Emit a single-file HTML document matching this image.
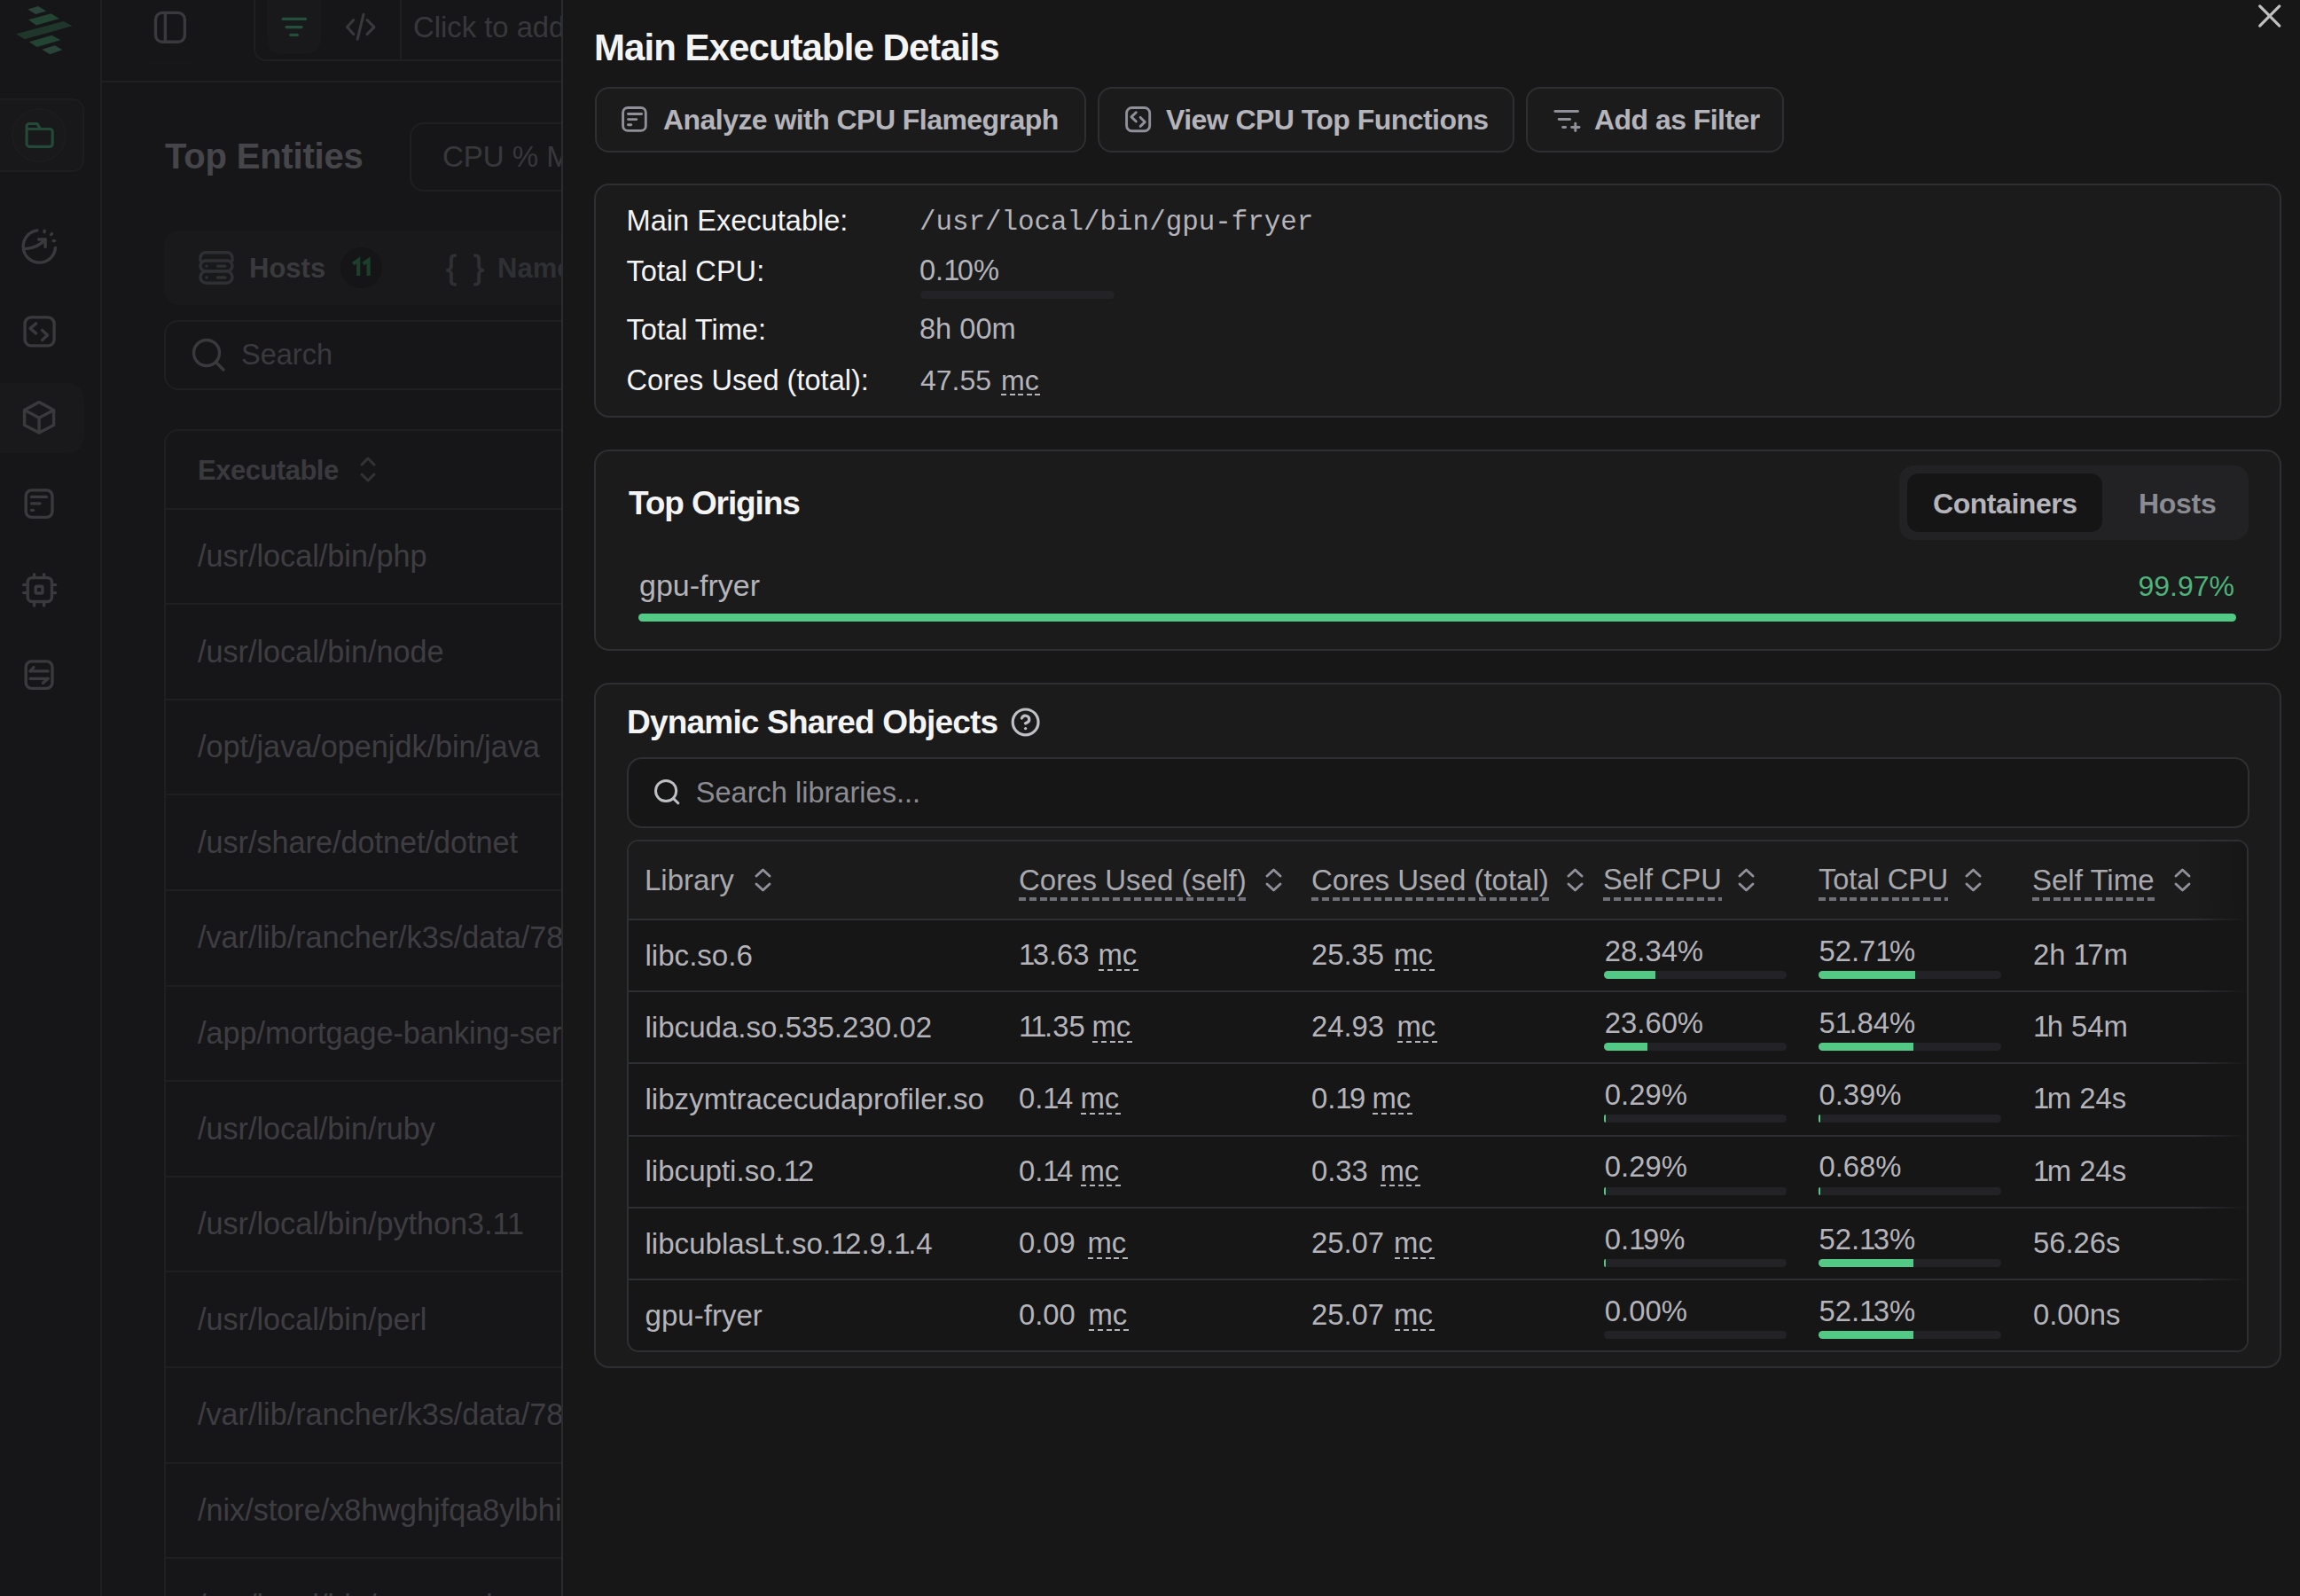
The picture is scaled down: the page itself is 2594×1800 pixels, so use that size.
<!DOCTYPE html>
<html><head><meta charset="utf-8"><title>Main Executable Details</title>
<style>
html,body{margin:0;padding:0;width:2594px;height:1800px;overflow:hidden;background:#161618;font-family:'Liberation Sans', sans-serif;}
</style></head><body>
<div style="position:absolute;left:113px;top:0px;width:2px;height:1800px;background:#1f1f22"></div><div style="position:absolute;left:115px;top:91px;width:519px;height:2px;background:#1f1f22"></div><svg style="position:absolute;left:0;top:0" width="100" height="70" viewBox="0 0 100 70"><polygon points="31.3,10.4 43.1,7 52.2,12.5 40.3,16" fill="#2a443a"/><polygon points="32,22.3 57.7,15.3 66.8,20.9 41,28.5" fill="#234433"/><polygon points="18.1,38.3 71.7,23.9 81.4,29.2 27.8,44.2" fill="#1f372b"/><polygon points="32.7,47.3 58.4,39.7 68.2,45.2 41.7,52.9" fill="#234433"/><polygon points="47.3,55.7 61.9,51.2 70.3,56.3 56.3,61.2" fill="#2a443a"/></svg><div style="position:absolute;left:-20px;top:111px;width:115px;height:83px;background:#18181a;border:2px solid #1d1d20;border-radius:13px;box-sizing:border-box"></div><div style="position:absolute;left:13px;top:122px;width:62px;height:61px;background:#19191b;border:2px solid #1c1c1f;border-radius:50%;box-sizing:border-box"></div><svg style="position:absolute;left:28px;top:137px;overflow:visible;" width="34" height="32" viewBox="0 0 34 32" fill="none" stroke="#234a37" stroke-width="3.1" stroke-linecap="round" stroke-linejoin="round"><path d="M2.1 25.4 V5.5 a3 3 0 0 1 3 -3 H14 l3.5 6 H28.2 a3 3 0 0 1 3 3 V25.4 a3 3 0 0 1 -3 3 H5.1 a3 3 0 0 1 -3 -3 Z M2.1 8.5 H17.5"/></svg><svg style="position:absolute;left:20px;top:254px;overflow:visible;" width="48" height="48" viewBox="0 0 48 48" fill="none" stroke="#3a3a3e" stroke-width="3.4" stroke-linecap="round" stroke-linejoin="round"><path d="M22 5.9 A18.2 18.2 0 1 0 42.5 25.5"/><path d="M8.6 26.6 Q22 26 31.1 16" /><path d="M23.6 16 L31.1 16 L31.1 24.6"/><path d="M30.1 6.3 L30.1 7.7"/><path d="M38.6 9.6 L37.6 10.6"/><path d="M41.6 17.6 L40.2 17.6"/></svg><svg style="position:absolute;left:24px;top:354px;overflow:visible;" width="40" height="40" viewBox="0 0 40 40" fill="none" stroke="#3a3a3e" stroke-width="3.4" stroke-linecap="round" stroke-linejoin="round"><rect x="4.1" y="3.9" width="33" height="32" rx="7"/><path d="M16.6 10.9 L10.1 16.4 L16.6 21.9"/><path d="M23.6 18.4 L29.6 23.9 L23.6 29.4"/></svg><div style="position:absolute;left:-20px;top:432px;width:115px;height:79px;background:#19191b;border-radius:18px"></div><svg style="position:absolute;left:24px;top:450px;overflow:visible;" width="40" height="42" viewBox="0 0 40 42" fill="none" stroke="#3a3a3e" stroke-width="3.4" stroke-linecap="round" stroke-linejoin="round"><path d="M20.1 3.6 L36.6 12.6 L36.6 29.6 L20.1 38 L3.6 29.6 L3.6 12.6 Z"/><path d="M3.6 12.6 L20.1 21.2 L36.6 12.6"/><path d="M20.1 21.2 L20.1 38"/></svg><svg style="position:absolute;left:24px;top:548px;overflow:visible;" width="40" height="40" viewBox="0 0 40 40" fill="none" stroke="#3a3a3e" stroke-width="3.4" stroke-linecap="round" stroke-linejoin="round"><rect x="5.2" y="4.9" width="29.8" height="30.5" rx="6.5"/><path d="M11.6 12.4 L28.4 12.4"/><path d="M11.6 19.9 L21 19.9"/><path d="M11.6 27.4 L13.5 27.4"/></svg><svg style="position:absolute;left:22px;top:642px;overflow:visible;" width="44" height="44" viewBox="0 0 44 44" fill="none" stroke="#3a3a3e" stroke-width="3.4" stroke-linecap="round" stroke-linejoin="round"><rect x="9.2" y="9.6" width="27.3" height="26.9" rx="5"/><rect x="18.2" y="19.2" width="7.8" height="7.8" rx="1.5"/><path d="M16.6 5.6 L16.6 9.6"/><path d="M27.6 5.6 L27.6 9.6"/><path d="M16.6 36.5 L16.6 41"/><path d="M27.6 36.5 L27.6 41"/><path d="M4.6 17.6 L9.2 17.6"/><path d="M4.6 26.6 L9.2 26.6"/><path d="M36.5 17.6 L40.6 17.6"/><path d="M36.5 26.6 L40.6 26.6"/></svg><svg style="position:absolute;left:24px;top:742px;overflow:visible;" width="40" height="40" viewBox="0 0 40 40" fill="none" stroke="#3a3a3e" stroke-width="3.4" stroke-linecap="round" stroke-linejoin="round"><rect x="5.2" y="3.9" width="29.8" height="30.5" rx="6.5"/><path d="M10.2 14.9 L30 14.9"/><path d="M14 10.5 L10.2 14.9"/><path d="M10.2 23.4 L30 23.4"/><path d="M30 23.4 L24.5 28.3"/></svg><svg style="position:absolute;left:172px;top:11px;overflow:visible;" width="40" height="40" viewBox="0 0 40 40" fill="none" stroke="#3a3a3e" stroke-width="3.4" stroke-linecap="round" stroke-linejoin="round"><rect x="3.5" y="3.4" width="32.9" height="32.9" rx="7.5"/><path d="M14.4 3.4 L14.4 36.3"/></svg><div style="position:absolute;left:167px;top:71px;width:50px;height:1px;background:#18181b"></div><div style="position:absolute;left:286px;top:-20px;width:414px;height:89px;border:2px solid #1f1f22;border-radius:14px;box-sizing:border-box"></div><div style="position:absolute;left:301px;top:-20px;width:61px;height:81px;background:#19191b;border-radius:16px"></div><svg style="position:absolute;left:314px;top:18px;overflow:visible;" width="36" height="26" viewBox="0 0 36 26" fill="none" stroke="#22503a" stroke-width="3.2" stroke-linecap="round" stroke-linejoin="round"><path d="M5 3.4 L30.5 3.4"/><path d="M9 12.6 L26.1 12.6"/><path d="M13.8 21.4 L21.3 21.4"/></svg><svg style="position:absolute;left:388px;top:13px;overflow:visible;" width="38" height="36" viewBox="0 0 38 36" fill="none" stroke="#3a3a3e" stroke-width="3" stroke-linecap="round" stroke-linejoin="round"><path d="M10.7 9.5 L3.5 17.6 L10.7 25.6"/><path d="M26 9.5 L34 17.6 L26 25.6"/><path d="M22 3.1 L15.2 31.2"/></svg><div style="position:absolute;left:451px;top:0px;width:2px;height:69px;background:#1f1f22"></div><div style="position:absolute;left:466px;top:14.83px;font-family:'Liberation Sans', sans-serif;font-size:32.8px;line-height:32.8px;font-weight:400;color:#38383c;letter-spacing:0px;white-space:nowrap;">Click to add a filter</div><div style="position:absolute;left:186px;top:156.13px;font-family:'Liberation Sans', sans-serif;font-size:40px;line-height:40px;font-weight:700;color:#46464a;letter-spacing:-0.2px;white-space:nowrap;">Top Entities</div><div style="position:absolute;left:462px;top:138px;width:438px;height:78px;border:2px solid #1f1f22;border-radius:16px;box-sizing:border-box"></div><div style="position:absolute;left:499px;top:160.06px;font-family:'Liberation Sans', sans-serif;font-size:33px;line-height:33px;font-weight:400;color:#38383c;letter-spacing:0px;white-space:nowrap;">CPU % Mem</div><div style="position:absolute;left:185px;top:260px;width:715px;height:84px;background:#19191b;border-radius:16px"></div><svg style="position:absolute;left:222px;top:281px;overflow:visible;" width="44" height="42" viewBox="0 0 44 42" fill="none" stroke="#2f3034" stroke-width="3.4" stroke-linecap="round" stroke-linejoin="round"><path d="M4 13 V9.7 a6 6 0 0 1 6 -6 H34 a6 6 0 0 1 6 6 V13"/><rect x="4" y="13" width="36" height="11.8" rx="5.9"/><rect x="4" y="24.8" width="36" height="13.4" rx="6.7"/><path d="M11 19.1 L11.1 19.1"/><path d="M23.5 19.1 L31.9 19.1"/><path d="M11 32 L11.1 32"/><path d="M23.5 32 L31.9 32"/></svg><div style="position:absolute;left:281px;top:286.75px;font-family:'Liberation Sans', sans-serif;font-size:31px;line-height:31px;font-weight:700;color:#3a3a3e;letter-spacing:0px;white-space:nowrap;">Hosts</div><div style="position:absolute;left:384px;top:278.5px;width:46.5px;height:46.5px;background:#151517;border-radius:50%"></div><svg style="position:absolute;left:395px;top:290px;overflow:visible;stroke-linecap:butt;stroke-linejoin:miter" width="26" height="26" viewBox="0 0 26 26" fill="none" stroke="#1b3f29" stroke-width="4.2" stroke-linecap="round" stroke-linejoin="round"><path d="M3.2 7.6 L9.2 3.4 V21"/><path d="M14.6 7.6 L20.6 3.4 V21"/></svg><div style="position:absolute;left:503px;top:283.52px;font-family:'Liberation Sans', sans-serif;font-size:36px;line-height:36px;font-weight:400;color:#303135;letter-spacing:0px;white-space:nowrap;-webkit-text-stroke:0.8px #303135">{</div><div style="position:absolute;left:534px;top:283.52px;font-family:'Liberation Sans', sans-serif;font-size:36px;line-height:36px;font-weight:400;color:#303135;letter-spacing:0px;white-space:nowrap;-webkit-text-stroke:0.8px #303135">}</div><div style="position:absolute;left:561px;top:286.75px;font-family:'Liberation Sans', sans-serif;font-size:31px;line-height:31px;font-weight:700;color:#2f3034;letter-spacing:0px;white-space:nowrap;">Namespaces</div><div style="position:absolute;left:185px;top:361px;width:715px;height:79px;border:2px solid #1f1f22;border-radius:16px;box-sizing:border-box"></div><svg style="position:absolute;left:216px;top:381px;overflow:visible;" width="40" height="40" viewBox="0 0 40 40" fill="none" stroke="#3a3a3e" stroke-width="3.4" stroke-linecap="round" stroke-linejoin="round"><circle cx="17" cy="17" r="14.5"/><path d="M27.5 27.5 L36 36"/></svg><div style="position:absolute;left:272px;top:384.48px;font-family:'Liberation Sans', sans-serif;font-size:32.5px;line-height:32.5px;font-weight:400;color:#3a3a3e;letter-spacing:0px;white-space:nowrap;">Search</div><div style="position:absolute;left:185px;top:484px;width:715px;height:1516px;border:2px solid #1f1f22;border-radius:16px;box-sizing:border-box"></div><div style="position:absolute;left:223px;top:514.75px;font-family:'Liberation Sans', sans-serif;font-size:31px;line-height:31px;font-weight:700;color:#3a3a3e;letter-spacing:-0.5px;white-space:nowrap;">Executable</div><svg style="position:absolute;left:404px;top:514px;overflow:visible;" width="24" height="32" viewBox="0 0 24 32" fill="none" stroke="#333336" stroke-width="3" stroke-linecap="round" stroke-linejoin="round"><path d="M4 10 L11 3 L18 10"/><path d="M4 21 L11 28 L18 21"/></svg><div style="position:absolute;left:187px;top:572.5px;width:713px;height:2.0px;background:#1f1f22"></div><div style="position:absolute;left:223px;top:610.04px;font-family:'Liberation Sans', sans-serif;font-size:34.2px;line-height:34.2px;font-weight:400;color:#3e3e42;letter-spacing:0px;white-space:nowrap;">/usr/local/bin/php</div><div style="position:absolute;left:187px;top:680.1px;width:713px;height:2.0px;background:#1f1f22"></div><div style="position:absolute;left:223px;top:717.64px;font-family:'Liberation Sans', sans-serif;font-size:34.2px;line-height:34.2px;font-weight:400;color:#3e3e42;letter-spacing:0px;white-space:nowrap;">/usr/local/bin/node</div><div style="position:absolute;left:187px;top:787.7px;width:713px;height:2.0px;background:#1f1f22"></div><div style="position:absolute;left:223px;top:825.24px;font-family:'Liberation Sans', sans-serif;font-size:34.2px;line-height:34.2px;font-weight:400;color:#3e3e42;letter-spacing:0px;white-space:nowrap;">/opt/java/openjdk/bin/java</div><div style="position:absolute;left:187px;top:895.3px;width:713px;height:2.0px;background:#1f1f22"></div><div style="position:absolute;left:223px;top:932.84px;font-family:'Liberation Sans', sans-serif;font-size:34.2px;line-height:34.2px;font-weight:400;color:#3e3e42;letter-spacing:0px;white-space:nowrap;">/usr/share/dotnet/dotnet</div><div style="position:absolute;left:187px;top:1002.9px;width:713px;height:2.0px;background:#1f1f22"></div><div style="position:absolute;left:223px;top:1040.44px;font-family:'Liberation Sans', sans-serif;font-size:34.2px;line-height:34.2px;font-weight:400;color:#3e3e42;letter-spacing:0px;white-space:nowrap;">/var/lib/rancher/k3s/data/78a9c8</div><div style="position:absolute;left:187px;top:1110.5px;width:713px;height:2.0px;background:#1f1f22"></div><div style="position:absolute;left:223px;top:1148.04px;font-family:'Liberation Sans', sans-serif;font-size:34.2px;line-height:34.2px;font-weight:400;color:#3e3e42;letter-spacing:0px;white-space:nowrap;">/app/mortgage-banking-service</div><div style="position:absolute;left:187px;top:1218.1px;width:713px;height:2.0px;background:#1f1f22"></div><div style="position:absolute;left:223px;top:1255.64px;font-family:'Liberation Sans', sans-serif;font-size:34.2px;line-height:34.2px;font-weight:400;color:#3e3e42;letter-spacing:0px;white-space:nowrap;">/usr/local/bin/ruby</div><div style="position:absolute;left:187px;top:1325.6999999999998px;width:713px;height:2.0px;background:#1f1f22"></div><div style="position:absolute;left:223px;top:1363.24px;font-family:'Liberation Sans', sans-serif;font-size:34.2px;line-height:34.2px;font-weight:400;color:#3e3e42;letter-spacing:0px;white-space:nowrap;">/usr/local/bin/python3.11</div><div style="position:absolute;left:187px;top:1433.3px;width:713px;height:2.0px;background:#1f1f22"></div><div style="position:absolute;left:223px;top:1470.84px;font-family:'Liberation Sans', sans-serif;font-size:34.2px;line-height:34.2px;font-weight:400;color:#3e3e42;letter-spacing:0px;white-space:nowrap;">/usr/local/bin/perl</div><div style="position:absolute;left:187px;top:1540.9px;width:713px;height:2.0px;background:#1f1f22"></div><div style="position:absolute;left:223px;top:1578.44px;font-family:'Liberation Sans', sans-serif;font-size:34.2px;line-height:34.2px;font-weight:400;color:#3e3e42;letter-spacing:0px;white-space:nowrap;">/var/lib/rancher/k3s/data/78a9c8</div><div style="position:absolute;left:187px;top:1648.5px;width:713px;height:2.0px;background:#1f1f22"></div><div style="position:absolute;left:223px;top:1686.04px;font-family:'Liberation Sans', sans-serif;font-size:34.2px;line-height:34.2px;font-weight:400;color:#3e3e42;letter-spacing:0px;white-space:nowrap;">/nix/store/x8hwghjfqa8ylbhi3k</div><div style="position:absolute;left:187px;top:1756.1px;width:713px;height:2.0px;background:#1f1f22"></div><div style="position:absolute;left:223px;top:1793.64px;font-family:'Liberation Sans', sans-serif;font-size:34.2px;line-height:34.2px;font-weight:400;color:#3e3e42;letter-spacing:0px;white-space:nowrap;">/usr/local/bin/some-other</div><div style="position:absolute;left:633px;top:0px;width:1961px;height:1800px;background:#171717;border-left:2px solid #2c2c30;box-sizing:border-box"></div><svg style="position:absolute;left:2544px;top:2px;overflow:visible;" width="32" height="32" viewBox="0 0 32 32" fill="none" stroke="#c0c0c0" stroke-width="3.2" stroke-linecap="round" stroke-linejoin="round"><path d="M4.7 4.9 L26.8 27.1"/><path d="M26.8 4.9 L4.7 27.1"/></svg><div style="position:absolute;left:670px;top:32.74px;font-family:'Liberation Sans', sans-serif;font-size:42px;line-height:42px;font-weight:700;color:#f4f4f5;letter-spacing:-0.95px;white-space:nowrap;">Main Executable Details</div><div style="position:absolute;left:671px;top:98px;width:554px;height:74px;background:#1b1b1c;border:2px solid #2e2f33;border-radius:16px;box-sizing:border-box"></div><svg style="position:absolute;left:699px;top:118px" width="33" height="33" viewBox="0 0 33 33" fill="none" stroke="#8f9099" stroke-width="2.9" stroke-linecap="round"><rect x="3.6" y="3.5" width="25.7" height="25.9" rx="5.5"/><path d="M9.5 10.5 L24.6 10.5"/><path d="M9.5 16.6 L18.8 16.6"/><path d="M9.5 22.7 L12.7 22.7"/></svg><div style="position:absolute;left:748px;top:118.91px;font-family:'Liberation Sans', sans-serif;font-size:32px;line-height:32px;font-weight:700;color:#b4b4ba;letter-spacing:-0.55px;white-space:nowrap;">Analyze with CPU Flamegraph</div><div style="position:absolute;left:1238px;top:98px;width:470px;height:74px;background:#1b1b1c;border:2px solid #2e2f33;border-radius:16px;box-sizing:border-box"></div><svg style="position:absolute;left:1266px;top:118px" width="33" height="33" viewBox="0 0 33 33" fill="none" stroke="#8f9099" stroke-width="2.9" stroke-linecap="round" stroke-linejoin="round"><rect x="4.6" y="3.5" width="26.1" height="26.2" rx="6"/><path d="M15.3 8.8 L10 13.9 L15.3 19"/><path d="M20.2 14.4 L25.2 19.6 L20.2 24.4"/></svg><div style="position:absolute;left:1315px;top:118.91px;font-family:'Liberation Sans', sans-serif;font-size:32px;line-height:32px;font-weight:700;color:#b4b4ba;letter-spacing:-0.55px;white-space:nowrap;">View CPU Top Functions</div><div style="position:absolute;left:1721px;top:98px;width:291px;height:74px;background:#1b1b1c;border:2px solid #2e2f33;border-radius:16px;box-sizing:border-box"></div><svg style="position:absolute;left:1749px;top:118px" width="36" height="33" viewBox="0 0 36 33" fill="none" stroke="#8f9099" stroke-width="2.9" stroke-linecap="round"><path d="M4.9 7.5 L30.5 7.5"/><path d="M9.2 16.5 L21.6 16.5"/><path d="M13.7 25.5 L16.6 25.5"/><path d="M23.7 25.5 L32 25.5"/><path d="M27.8 21.1 L27.8 29.6"/></svg><div style="position:absolute;left:1798px;top:118.91px;font-family:'Liberation Sans', sans-serif;font-size:32px;line-height:32px;font-weight:700;color:#b4b4ba;letter-spacing:-0.55px;white-space:nowrap;">Add as Filter</div><div style="position:absolute;left:670px;top:207px;width:1903px;height:264px;background:#1b1b1c;border:2px solid #2e2f33;border-radius:17px;box-sizing:border-box"></div><div style="position:absolute;left:706.5px;top:233.20px;font-family:'Liberation Sans', sans-serif;font-size:32.6px;line-height:32.6px;font-weight:400;color:#f4f4f5;letter-spacing:0px;white-space:nowrap;">Main Executable:</div><div style="position:absolute;left:706.5px;top:290.20px;font-family:'Liberation Sans', sans-serif;font-size:32.6px;line-height:32.6px;font-weight:400;color:#f4f4f5;letter-spacing:0px;white-space:nowrap;">Total CPU:</div><div style="position:absolute;left:706.5px;top:355.70px;font-family:'Liberation Sans', sans-serif;font-size:32.6px;line-height:32.6px;font-weight:400;color:#f4f4f5;letter-spacing:0px;white-space:nowrap;">Total Time:</div><div style="position:absolute;left:706.5px;top:413.20px;font-family:'Liberation Sans', sans-serif;font-size:32.6px;line-height:32.6px;font-weight:400;color:#f4f4f5;letter-spacing:0px;white-space:nowrap;">Cores Used (total):</div><div style="position:absolute;left:1037px;top:235.87px;font-family:'Liberation Mono', monospace;font-size:30.85px;line-height:30.85px;font-weight:400;color:#b4b4ba;letter-spacing:0px;white-space:nowrap;">/usr/local/bin/gpu-fryer</div><div style="position:absolute;left:1037px;top:289.40px;font-family:'Liberation Sans', sans-serif;font-size:32.6px;line-height:32.6px;font-weight:400;color:#b4b4ba;letter-spacing:0px;white-space:nowrap;">0.<span style="letter-spacing:-2.5px">1</span>0%</div><div style="position:absolute;left:1038px;top:328px;width:219px;height:9px;background:#232327;border-radius:5px"></div><div style="position:absolute;left:1037px;top:354.90px;font-family:'Liberation Sans', sans-serif;font-size:32.6px;line-height:32.6px;font-weight:400;color:#b4b4ba;letter-spacing:0px;white-space:nowrap;">8h 00m</div><div style="position:absolute;left:1038px;top:412.91px;font-family:'Liberation Sans', sans-serif;font-size:32px;line-height:32px;font-weight:400;color:#b4b4ba;letter-spacing:0px;white-space:nowrap;">47.55</div><div style="position:absolute;left:1129px;top:412.91px;font-family:'Liberation Sans', sans-serif;font-size:32px;line-height:32px;font-weight:400;color:#b4b4ba;letter-spacing:0px;white-space:nowrap;">mc</div><div style="position:absolute;left:1129px;top:444px;width:44px;height:2px;background:repeating-linear-gradient(90deg,#b4b4ba 0 6px,transparent 6px 9.6px)"></div><div style="position:absolute;left:670px;top:507px;width:1903px;height:227px;background:#1b1b1c;border:2px solid #2e2f33;border-radius:17px;box-sizing:border-box"></div><div style="position:absolute;left:709px;top:548.67px;font-family:'Liberation Sans', sans-serif;font-size:37px;line-height:37px;font-weight:700;color:#f4f4f5;letter-spacing:-1.1px;white-space:nowrap;">Top Origins</div><div style="position:absolute;left:2142px;top:525px;width:394px;height:84px;background:#222225;border-radius:16px"></div><div style="position:absolute;left:2151px;top:534px;width:220px;height:66px;background:#151516;border-radius:13px"></div><div style="position:absolute;left:2180px;top:551.51px;font-family:'Liberation Sans', sans-serif;font-size:32px;line-height:32px;font-weight:700;color:#b4b4ba;letter-spacing:-0.45px;white-space:nowrap;">Containers</div><div style="position:absolute;left:2412px;top:551.51px;font-family:'Liberation Sans', sans-serif;font-size:32px;line-height:32px;font-weight:700;color:#8b8b92;letter-spacing:-0.3px;white-space:nowrap;">Hosts</div><div style="position:absolute;left:721px;top:643.41px;font-family:'Liberation Sans', sans-serif;font-size:34px;line-height:34px;font-weight:400;color:#b4b4ba;letter-spacing:0px;white-space:nowrap;">gpu-fryer</div><div style="position:absolute;right:74px;top:644.71px;font-family:'Liberation Sans', sans-serif;font-size:32px;line-height:32px;font-weight:400;color:#4fb37a;letter-spacing:0px;white-space:nowrap;">99.97%</div><div style="position:absolute;left:720px;top:692px;width:1802px;height:9px;background:#52c985;border-radius:5px"></div><div style="position:absolute;left:670px;top:770px;width:1903px;height:773px;background:#1b1b1c;border:2px solid #2e2f33;border-radius:17px;box-sizing:border-box"></div><div style="position:absolute;left:707px;top:795.97px;font-family:'Liberation Sans', sans-serif;font-size:37px;line-height:37px;font-weight:700;color:#f4f4f5;letter-spacing:-0.8px;white-space:nowrap;">Dynamic Shared Objects</div><svg style="position:absolute;left:1139px;top:797px;overflow:visible;" width="35" height="35" viewBox="0 0 35 35" fill="none" stroke="#bfc0c5" stroke-width="3.2" stroke-linecap="round" stroke-linejoin="round"><circle cx="17.6" cy="17.4" r="14.4"/><g transform="translate(0.32 0.12) scale(1.44)" stroke-width="2.25"><path d="M9.09 9a3 3 0 0 1 5.83 1c0 2-3 3-3 3"/><path d="M12 17h.01"/></g></svg><div style="position:absolute;left:707px;top:854px;width:1830px;height:80px;background:#161617;border:2px solid #2e2f33;border-radius:17px;box-sizing:border-box"></div><svg style="position:absolute;left:735px;top:876px;overflow:visible;" width="36" height="36" viewBox="0 0 36 36" fill="none" stroke="#bfc0c5" stroke-width="3" stroke-linecap="round" stroke-linejoin="round"><circle cx="16.1" cy="16" r="11.6"/><path d="M24.6 24.6 L29.8 29.8"/></svg><div style="position:absolute;left:784.7px;top:878.20px;font-family:'Liberation Sans', sans-serif;font-size:32.6px;line-height:32.6px;font-weight:400;color:#8b8b92;letter-spacing:0px;white-space:nowrap;">Search libraries...</div><div style="position:absolute;left:707px;top:947px;width:1829px;height:578px;background:#161617;border:2px solid #2e2f33;border-radius:13px;box-sizing:border-box;overflow:hidden"></div><div style="position:absolute;left:709px;top:949px;width:1825px;height:87px;background:#1b1b1c;border-radius:11px 11px 0 0"></div><div style="position:absolute;left:709px;top:1036px;width:1825px;height:2px;background:#2e2f33"></div><div style="position:absolute;left:727px;top:975.66px;font-family:'Liberation Sans', sans-serif;font-size:33px;line-height:33px;font-weight:400;color:#a9a9ae;letter-spacing:0px;white-space:nowrap;">Library</div><svg style="position:absolute;left:849px;top:976px;overflow:visible;" width="25" height="32" viewBox="0 0 25 32" fill="none" stroke="#8f9099" stroke-width="2.9" stroke-linecap="round" stroke-linejoin="round"><path d="M4 12 L11.5 5 L19 12"/><path d="M4 21 L11.5 28 L19 21"/></svg><div style="position:absolute;left:1149px;top:975.66px;font-family:'Liberation Sans', sans-serif;font-size:33px;line-height:33px;font-weight:400;color:#a9a9ae;letter-spacing:0px;white-space:nowrap;">Cores Used (self)<div style="position:absolute;left:0;right:0px;top:36.5411px;height:3.6px;background:repeating-linear-gradient(90deg,#6f7078 0 8px,transparent 8px 11.8px)"></div></div><svg style="position:absolute;left:1424.5px;top:976px;overflow:visible;" width="25" height="32" viewBox="0 0 25 32" fill="none" stroke="#8f9099" stroke-width="2.9" stroke-linecap="round" stroke-linejoin="round"><path d="M4 12 L11.5 5 L19 12"/><path d="M4 21 L11.5 28 L19 21"/></svg><div style="position:absolute;left:1479px;top:975.66px;font-family:'Liberation Sans', sans-serif;font-size:33px;line-height:33px;font-weight:400;color:#a9a9ae;letter-spacing:0px;white-space:nowrap;">Cores Used (total)<div style="position:absolute;left:0;right:0px;top:36.5411px;height:3.6px;background:repeating-linear-gradient(90deg,#6f7078 0 8px,transparent 8px 11.8px)"></div></div><svg style="position:absolute;left:1765px;top:976px;overflow:visible;" width="25" height="32" viewBox="0 0 25 32" fill="none" stroke="#8f9099" stroke-width="2.9" stroke-linecap="round" stroke-linejoin="round"><path d="M4 12 L11.5 5 L19 12"/><path d="M4 21 L11.5 28 L19 21"/></svg><div style="position:absolute;left:1808px;top:976.08px;font-family:'Liberation Sans', sans-serif;font-size:32.5px;line-height:32.5px;font-weight:400;color:#a9a9ae;letter-spacing:0px;white-space:nowrap;">Self CPU<div style="position:absolute;left:0;right:0px;top:36.11775px;height:3.6px;background:repeating-linear-gradient(90deg,#6f7078 0 8px,transparent 8px 11.8px)"></div></div><svg style="position:absolute;left:1958px;top:976px;overflow:visible;" width="25" height="32" viewBox="0 0 25 32" fill="none" stroke="#8f9099" stroke-width="2.9" stroke-linecap="round" stroke-linejoin="round"><path d="M4 12 L11.5 5 L19 12"/><path d="M4 21 L11.5 28 L19 21"/></svg><div style="position:absolute;left:2051px;top:976.08px;font-family:'Liberation Sans', sans-serif;font-size:32.5px;line-height:32.5px;font-weight:400;color:#a9a9ae;letter-spacing:0px;white-space:nowrap;">Total CPU<div style="position:absolute;left:0;right:0px;top:36.11775px;height:3.6px;background:repeating-linear-gradient(90deg,#6f7078 0 8px,transparent 8px 11.8px)"></div></div><svg style="position:absolute;left:2214px;top:976px;overflow:visible;" width="25" height="32" viewBox="0 0 25 32" fill="none" stroke="#8f9099" stroke-width="2.9" stroke-linecap="round" stroke-linejoin="round"><path d="M4 12 L11.5 5 L19 12"/><path d="M4 21 L11.5 28 L19 21"/></svg><div style="position:absolute;left:2292px;top:975.66px;font-family:'Liberation Sans', sans-serif;font-size:33px;line-height:33px;font-weight:400;color:#a9a9ae;letter-spacing:0px;white-space:nowrap;">Self Time<div style="position:absolute;left:0;right:0px;top:36.5411px;height:3.6px;background:repeating-linear-gradient(90deg,#6f7078 0 8px,transparent 8px 11.8px)"></div></div><svg style="position:absolute;left:2450px;top:976px;overflow:visible;" width="25" height="32" viewBox="0 0 25 32" fill="none" stroke="#8f9099" stroke-width="2.9" stroke-linecap="round" stroke-linejoin="round"><path d="M4 12 L11.5 5 L19 12"/><path d="M4 21 L11.5 28 L19 21"/></svg><div style="position:absolute;left:727.5px;top:1060.77px;font-family:'Liberation Sans', sans-serif;font-size:33.1px;line-height:33.1px;font-weight:400;color:#b4b4ba;letter-spacing:0px;white-space:nowrap;">libc.so.6</div><div style="position:absolute;left:1149px;top:1061.03px;font-family:'Liberation Sans', sans-serif;font-size:32.8px;line-height:32.8px;font-weight:400;color:#b4b4ba;letter-spacing:0px;white-space:nowrap;"><span style="letter-spacing:-2.5px">1</span>3.63</div><div style="position:absolute;left:1479px;top:1061.03px;font-family:'Liberation Sans', sans-serif;font-size:32.8px;line-height:32.8px;font-weight:400;color:#b4b4ba;letter-spacing:0px;white-space:nowrap;">25.35</div><div style="position:absolute;left:1238.5px;top:1061.03px;font-family:'Liberation Sans', sans-serif;font-size:32.8px;line-height:32.8px;font-weight:400;color:#b4b4ba;letter-spacing:0px;white-space:nowrap;">mc</div><div style="position:absolute;left:1239px;top:1092.8px;width:45px;height:2.0px;background:repeating-linear-gradient(90deg,#b4b4ba 0 6px,transparent 6px 9.8px)"></div><div style="position:absolute;left:1572.1px;top:1061.03px;font-family:'Liberation Sans', sans-serif;font-size:32.8px;line-height:32.8px;font-weight:400;color:#b4b4ba;letter-spacing:0px;white-space:nowrap;">mc</div><div style="position:absolute;left:1572.6px;top:1092.8px;width:45.0px;height:2.0px;background:repeating-linear-gradient(90deg,#b4b4ba 0 6px,transparent 6px 9.8px)"></div><div style="position:absolute;left:1809.8px;top:1056.73px;font-family:'Liberation Sans', sans-serif;font-size:32.8px;line-height:32.8px;font-weight:400;color:#b4b4ba;letter-spacing:0px;white-space:nowrap;">28.34%</div><div style="position:absolute;left:2051.5px;top:1056.73px;font-family:'Liberation Sans', sans-serif;font-size:32.8px;line-height:32.8px;font-weight:400;color:#b4b4ba;letter-spacing:0px;white-space:nowrap;">52.7<span style="letter-spacing:-2.5px">1</span>%</div><div style="position:absolute;left:2293px;top:1061.03px;font-family:'Liberation Sans', sans-serif;font-size:32.8px;line-height:32.8px;font-weight:400;color:#b4b4ba;letter-spacing:0px;white-space:nowrap;">2h <span style="letter-spacing:-2.5px">1</span>7m</div><div style="position:absolute;left:1809px;top:1095.0px;width:206px;height:9.0px;background:#232327;border-radius:5px"></div><div style="position:absolute;left:1809px;top:1095.0px;width:58.38040000000001px;height:9.0px;background:#52c985;border-radius:5px 0 0 5px"></div><div style="position:absolute;left:2051px;top:1095.0px;width:206px;height:9.0px;background:#232327;border-radius:5px"></div><div style="position:absolute;left:2051px;top:1095.0px;width:108.58260000000018px;height:9.0px;background:#52c985;border-radius:5px 0 0 5px"></div><div style="position:absolute;left:709px;top:1117.2px;width:1825px;height:2.0px;background:#2e2f33"></div><div style="position:absolute;left:727.5px;top:1141.97px;font-family:'Liberation Sans', sans-serif;font-size:33.1px;line-height:33.1px;font-weight:400;color:#b4b4ba;letter-spacing:0px;white-space:nowrap;">libcuda.so.535.230.02</div><div style="position:absolute;left:1149px;top:1142.23px;font-family:'Liberation Sans', sans-serif;font-size:32.8px;line-height:32.8px;font-weight:400;color:#b4b4ba;letter-spacing:0px;white-space:nowrap;"><span style="letter-spacing:-2.5px">1</span><span style="letter-spacing:-2.5px">1</span>.35</div><div style="position:absolute;left:1479px;top:1142.23px;font-family:'Liberation Sans', sans-serif;font-size:32.8px;line-height:32.8px;font-weight:400;color:#b4b4ba;letter-spacing:0px;white-space:nowrap;">24.93</div><div style="position:absolute;left:1231.5px;top:1142.23px;font-family:'Liberation Sans', sans-serif;font-size:32.8px;line-height:32.8px;font-weight:400;color:#b4b4ba;letter-spacing:0px;white-space:nowrap;">mc</div><div style="position:absolute;left:1232px;top:1174.0px;width:45px;height:2.0px;background:repeating-linear-gradient(90deg,#b4b4ba 0 6px,transparent 6px 9.8px)"></div><div style="position:absolute;left:1575.4px;top:1142.23px;font-family:'Liberation Sans', sans-serif;font-size:32.8px;line-height:32.8px;font-weight:400;color:#b4b4ba;letter-spacing:0px;white-space:nowrap;">mc</div><div style="position:absolute;left:1575.9px;top:1174.0px;width:45.0px;height:2.0px;background:repeating-linear-gradient(90deg,#b4b4ba 0 6px,transparent 6px 9.8px)"></div><div style="position:absolute;left:1809.8px;top:1137.93px;font-family:'Liberation Sans', sans-serif;font-size:32.8px;line-height:32.8px;font-weight:400;color:#b4b4ba;letter-spacing:0px;white-space:nowrap;">23.60%</div><div style="position:absolute;left:2051.5px;top:1137.93px;font-family:'Liberation Sans', sans-serif;font-size:32.8px;line-height:32.8px;font-weight:400;color:#b4b4ba;letter-spacing:0px;white-space:nowrap;">5<span style="letter-spacing:-2.5px">1</span>.84%</div><div style="position:absolute;left:2293px;top:1142.23px;font-family:'Liberation Sans', sans-serif;font-size:32.8px;line-height:32.8px;font-weight:400;color:#b4b4ba;letter-spacing:0px;white-space:nowrap;"><span style="letter-spacing:-2.5px">1</span>h 54m</div><div style="position:absolute;left:1809px;top:1176.2px;width:206px;height:9.0px;background:#232327;border-radius:5px"></div><div style="position:absolute;left:1809px;top:1176.2px;width:48.615999999999985px;height:9.0px;background:#52c985;border-radius:5px 0 0 5px"></div><div style="position:absolute;left:2051px;top:1176.2px;width:206px;height:9.0px;background:#232327;border-radius:5px"></div><div style="position:absolute;left:2051px;top:1176.2px;width:106.79039999999986px;height:9.0px;background:#52c985;border-radius:5px 0 0 5px"></div><div style="position:absolute;left:709px;top:1198.4px;width:1825px;height:2.0px;background:#2e2f33"></div><div style="position:absolute;left:727.5px;top:1223.17px;font-family:'Liberation Sans', sans-serif;font-size:33.1px;line-height:33.1px;font-weight:400;color:#b4b4ba;letter-spacing:0px;white-space:nowrap;">libzymtracecudaprofiler.so</div><div style="position:absolute;left:1149px;top:1223.43px;font-family:'Liberation Sans', sans-serif;font-size:32.8px;line-height:32.8px;font-weight:400;color:#b4b4ba;letter-spacing:0px;white-space:nowrap;">0.<span style="letter-spacing:-2.5px">1</span>4</div><div style="position:absolute;left:1479px;top:1223.43px;font-family:'Liberation Sans', sans-serif;font-size:32.8px;line-height:32.8px;font-weight:400;color:#b4b4ba;letter-spacing:0px;white-space:nowrap;">0.<span style="letter-spacing:-2.5px">1</span>9</div><div style="position:absolute;left:1218.5px;top:1223.43px;font-family:'Liberation Sans', sans-serif;font-size:32.8px;line-height:32.8px;font-weight:400;color:#b4b4ba;letter-spacing:0px;white-space:nowrap;">mc</div><div style="position:absolute;left:1219px;top:1255.2px;width:45px;height:2.0px;background:repeating-linear-gradient(90deg,#b4b4ba 0 6px,transparent 6px 9.8px)"></div><div style="position:absolute;left:1547.5px;top:1223.43px;font-family:'Liberation Sans', sans-serif;font-size:32.8px;line-height:32.8px;font-weight:400;color:#b4b4ba;letter-spacing:0px;white-space:nowrap;">mc</div><div style="position:absolute;left:1548px;top:1255.2px;width:45px;height:2.0px;background:repeating-linear-gradient(90deg,#b4b4ba 0 6px,transparent 6px 9.8px)"></div><div style="position:absolute;left:1809.8px;top:1219.13px;font-family:'Liberation Sans', sans-serif;font-size:32.8px;line-height:32.8px;font-weight:400;color:#b4b4ba;letter-spacing:0px;white-space:nowrap;">0.29%</div><div style="position:absolute;left:2051.5px;top:1219.13px;font-family:'Liberation Sans', sans-serif;font-size:32.8px;line-height:32.8px;font-weight:400;color:#b4b4ba;letter-spacing:0px;white-space:nowrap;">0.39%</div><div style="position:absolute;left:2293px;top:1223.43px;font-family:'Liberation Sans', sans-serif;font-size:32.8px;line-height:32.8px;font-weight:400;color:#b4b4ba;letter-spacing:0px;white-space:nowrap;"><span style="letter-spacing:-2.5px">1</span>m 24s</div><div style="position:absolute;left:1809px;top:1257.4px;width:206px;height:9.0px;background:#232327;border-radius:5px"></div><div style="position:absolute;left:1809px;top:1257.4px;width:1.599999999999909px;height:9.0px;background:#52c985;border-radius:5px 0 0 5px"></div><div style="position:absolute;left:2051px;top:1257.4px;width:206px;height:9.0px;background:#232327;border-radius:5px"></div><div style="position:absolute;left:2051px;top:1257.4px;width:1.599999999999909px;height:9.0px;background:#52c985;border-radius:5px 0 0 5px"></div><div style="position:absolute;left:709px;top:1279.6px;width:1825px;height:2.0px;background:#2e2f33"></div><div style="position:absolute;left:727.5px;top:1304.37px;font-family:'Liberation Sans', sans-serif;font-size:33.1px;line-height:33.1px;font-weight:400;color:#b4b4ba;letter-spacing:0px;white-space:nowrap;">libcupti.so.<span style="letter-spacing:-2.5px">1</span>2</div><div style="position:absolute;left:1149px;top:1304.63px;font-family:'Liberation Sans', sans-serif;font-size:32.8px;line-height:32.8px;font-weight:400;color:#b4b4ba;letter-spacing:0px;white-space:nowrap;">0.<span style="letter-spacing:-2.5px">1</span>4</div><div style="position:absolute;left:1479px;top:1304.63px;font-family:'Liberation Sans', sans-serif;font-size:32.8px;line-height:32.8px;font-weight:400;color:#b4b4ba;letter-spacing:0px;white-space:nowrap;">0.33</div><div style="position:absolute;left:1218.5px;top:1304.63px;font-family:'Liberation Sans', sans-serif;font-size:32.8px;line-height:32.8px;font-weight:400;color:#b4b4ba;letter-spacing:0px;white-space:nowrap;">mc</div><div style="position:absolute;left:1219px;top:1336.3999999999999px;width:45px;height:2.0px;background:repeating-linear-gradient(90deg,#b4b4ba 0 6px,transparent 6px 9.8px)"></div><div style="position:absolute;left:1556.5px;top:1304.63px;font-family:'Liberation Sans', sans-serif;font-size:32.8px;line-height:32.8px;font-weight:400;color:#b4b4ba;letter-spacing:0px;white-space:nowrap;">mc</div><div style="position:absolute;left:1557px;top:1336.3999999999999px;width:45px;height:2.0px;background:repeating-linear-gradient(90deg,#b4b4ba 0 6px,transparent 6px 9.8px)"></div><div style="position:absolute;left:1809.8px;top:1300.33px;font-family:'Liberation Sans', sans-serif;font-size:32.8px;line-height:32.8px;font-weight:400;color:#b4b4ba;letter-spacing:0px;white-space:nowrap;">0.29%</div><div style="position:absolute;left:2051.5px;top:1300.33px;font-family:'Liberation Sans', sans-serif;font-size:32.8px;line-height:32.8px;font-weight:400;color:#b4b4ba;letter-spacing:0px;white-space:nowrap;">0.68%</div><div style="position:absolute;left:2293px;top:1304.63px;font-family:'Liberation Sans', sans-serif;font-size:32.8px;line-height:32.8px;font-weight:400;color:#b4b4ba;letter-spacing:0px;white-space:nowrap;"><span style="letter-spacing:-2.5px">1</span>m 24s</div><div style="position:absolute;left:1809px;top:1338.6px;width:206px;height:9.0px;background:#232327;border-radius:5px"></div><div style="position:absolute;left:1809px;top:1338.6px;width:1.599999999999909px;height:9.0px;background:#52c985;border-radius:5px 0 0 5px"></div><div style="position:absolute;left:2051px;top:1338.6px;width:206px;height:9.0px;background:#232327;border-radius:5px"></div><div style="position:absolute;left:2051px;top:1338.6px;width:1.599999999999909px;height:9.0px;background:#52c985;border-radius:5px 0 0 5px"></div><div style="position:absolute;left:709px;top:1360.8px;width:1825px;height:2.0px;background:#2e2f33"></div><div style="position:absolute;left:727.5px;top:1385.57px;font-family:'Liberation Sans', sans-serif;font-size:33.1px;line-height:33.1px;font-weight:400;color:#b4b4ba;letter-spacing:0px;white-space:nowrap;">libcublasLt.so.<span style="letter-spacing:-2.5px">1</span>2.9.<span style="letter-spacing:-2.5px">1</span>.4</div><div style="position:absolute;left:1149px;top:1385.83px;font-family:'Liberation Sans', sans-serif;font-size:32.8px;line-height:32.8px;font-weight:400;color:#b4b4ba;letter-spacing:0px;white-space:nowrap;">0.09</div><div style="position:absolute;left:1479px;top:1385.83px;font-family:'Liberation Sans', sans-serif;font-size:32.8px;line-height:32.8px;font-weight:400;color:#b4b4ba;letter-spacing:0px;white-space:nowrap;">25.07</div><div style="position:absolute;left:1226.5px;top:1385.83px;font-family:'Liberation Sans', sans-serif;font-size:32.8px;line-height:32.8px;font-weight:400;color:#b4b4ba;letter-spacing:0px;white-space:nowrap;">mc</div><div style="position:absolute;left:1227px;top:1417.6px;width:45px;height:2.0px;background:repeating-linear-gradient(90deg,#b4b4ba 0 6px,transparent 6px 9.8px)"></div><div style="position:absolute;left:1572.1px;top:1385.83px;font-family:'Liberation Sans', sans-serif;font-size:32.8px;line-height:32.8px;font-weight:400;color:#b4b4ba;letter-spacing:0px;white-space:nowrap;">mc</div><div style="position:absolute;left:1572.6px;top:1417.6px;width:45.0px;height:2.0px;background:repeating-linear-gradient(90deg,#b4b4ba 0 6px,transparent 6px 9.8px)"></div><div style="position:absolute;left:1809.8px;top:1381.53px;font-family:'Liberation Sans', sans-serif;font-size:32.8px;line-height:32.8px;font-weight:400;color:#b4b4ba;letter-spacing:0px;white-space:nowrap;">0.<span style="letter-spacing:-2.5px">1</span>9%</div><div style="position:absolute;left:2051.5px;top:1381.53px;font-family:'Liberation Sans', sans-serif;font-size:32.8px;line-height:32.8px;font-weight:400;color:#b4b4ba;letter-spacing:0px;white-space:nowrap;">52.<span style="letter-spacing:-2.5px">1</span>3%</div><div style="position:absolute;left:2293px;top:1385.83px;font-family:'Liberation Sans', sans-serif;font-size:32.8px;line-height:32.8px;font-weight:400;color:#b4b4ba;letter-spacing:0px;white-space:nowrap;">56.26s</div><div style="position:absolute;left:1809px;top:1419.8px;width:206px;height:9.0px;background:#232327;border-radius:5px"></div><div style="position:absolute;left:1809px;top:1419.8px;width:1.599999999999909px;height:9.0px;background:#52c985;border-radius:5px 0 0 5px"></div><div style="position:absolute;left:2051px;top:1419.8px;width:206px;height:9.0px;background:#232327;border-radius:5px"></div><div style="position:absolute;left:2051px;top:1419.8px;width:107.38779999999997px;height:9.0px;background:#52c985;border-radius:5px 0 0 5px"></div><div style="position:absolute;left:709px;top:1442.0px;width:1825px;height:2.0px;background:#2e2f33"></div><div style="position:absolute;left:727.5px;top:1466.77px;font-family:'Liberation Sans', sans-serif;font-size:33.1px;line-height:33.1px;font-weight:400;color:#b4b4ba;letter-spacing:0px;white-space:nowrap;">gpu-fryer</div><div style="position:absolute;left:1149px;top:1467.03px;font-family:'Liberation Sans', sans-serif;font-size:32.8px;line-height:32.8px;font-weight:400;color:#b4b4ba;letter-spacing:0px;white-space:nowrap;">0.00</div><div style="position:absolute;left:1479px;top:1467.03px;font-family:'Liberation Sans', sans-serif;font-size:32.8px;line-height:32.8px;font-weight:400;color:#b4b4ba;letter-spacing:0px;white-space:nowrap;">25.07</div><div style="position:absolute;left:1227.5px;top:1467.03px;font-family:'Liberation Sans', sans-serif;font-size:32.8px;line-height:32.8px;font-weight:400;color:#b4b4ba;letter-spacing:0px;white-space:nowrap;">mc</div><div style="position:absolute;left:1228px;top:1498.8px;width:45px;height:2.0px;background:repeating-linear-gradient(90deg,#b4b4ba 0 6px,transparent 6px 9.8px)"></div><div style="position:absolute;left:1572.1px;top:1467.03px;font-family:'Liberation Sans', sans-serif;font-size:32.8px;line-height:32.8px;font-weight:400;color:#b4b4ba;letter-spacing:0px;white-space:nowrap;">mc</div><div style="position:absolute;left:1572.6px;top:1498.8px;width:45.0px;height:2.0px;background:repeating-linear-gradient(90deg,#b4b4ba 0 6px,transparent 6px 9.8px)"></div><div style="position:absolute;left:1809.8px;top:1462.73px;font-family:'Liberation Sans', sans-serif;font-size:32.8px;line-height:32.8px;font-weight:400;color:#b4b4ba;letter-spacing:0px;white-space:nowrap;">0.00%</div><div style="position:absolute;left:2051.5px;top:1462.73px;font-family:'Liberation Sans', sans-serif;font-size:32.8px;line-height:32.8px;font-weight:400;color:#b4b4ba;letter-spacing:0px;white-space:nowrap;">52.<span style="letter-spacing:-2.5px">1</span>3%</div><div style="position:absolute;left:2293px;top:1467.03px;font-family:'Liberation Sans', sans-serif;font-size:32.8px;line-height:32.8px;font-weight:400;color:#b4b4ba;letter-spacing:0px;white-space:nowrap;">0.00ns</div><div style="position:absolute;left:1809px;top:1501.0px;width:206px;height:9.0px;background:#232327;border-radius:5px"></div><div style="position:absolute;left:2051px;top:1501.0px;width:206px;height:9.0px;background:#232327;border-radius:5px"></div><div style="position:absolute;left:2051px;top:1501.0px;width:107.38779999999997px;height:9.0px;background:#52c985;border-radius:5px 0 0 5px"></div><div style="position:absolute;left:2474px;top:949px;width:60px;height:574px;background:linear-gradient(90deg,rgba(22,22,23,0),rgba(22,22,23,1));border-radius:0 11px 11px 0"></div>
</body></html>
